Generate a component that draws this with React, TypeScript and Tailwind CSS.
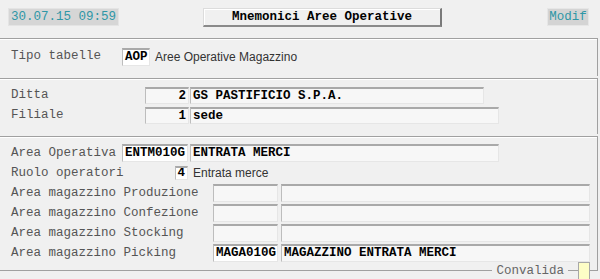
import React from "react";

const mono = { fontFamily: '"Liberation Mono", "Courier New", monospace' };

const boxBase =
  "box-border flex items-center shrink-0 border-t-2 border-t-[#a9a9a9] border-l border-l-[#bdbdbd] border-r border-r-[#e6e6e6] border-b border-b-[#e6e6e6] font-bold text-black px-[2px] leading-none overflow-hidden whitespace-nowrap";

export default function App() {
  return (
    <div
      className="w-[600px] h-[279px] bg-[#f0f0f0] overflow-hidden text-[12.5px] text-[#555]"
      style={mono}
    >
      {/* top bar */}
      <div className="h-[38px] flex items-start pt-[8px] pl-[8px]">
        <div className="w-[111px] h-[18px] bg-[#d6d6d6] border border-[#e4e4e4] flex items-center pl-[2px] text-[#2f97a6] leading-none">
          30.07.15 09:59
        </div>
        <div className="ml-[84px] w-[239px] h-[19px] box-border bg-[#f0f0f0] border-t border-l border-t-[#dcdcdc] border-l-[#dcdcdc] border-r-2 border-b-2 border-r-[#7a7a7a] border-b-[#8a8a8a] shadow-[inset_1px_1px_0_#ffffff] flex items-center justify-center font-bold text-black leading-none">
          Mnemonici Aree Operative
        </div>
        <div className="ml-[105px] w-[42px] h-[18px] box-border bg-[#d4d4d4] border border-[#e6e6e6] flex items-center justify-center text-[#2f97a6] leading-none">
          Modif
        </div>
      </div>

      <div className="w-[598px]">
        {/* Panel A */}
        <div className="h-[38px] box-border border-t border-r border-[#a0a0a0] shadow-[inset_0_1px_0_#ffffff] pt-[9px] pl-[11px]">
          <div className="flex items-center h-[17px]">
            <div className="w-[111px] shrink-0">Tipo tabelle</div>
            <div className={`${boxBase} w-[28px] h-[18px] bg-white`}>AOP</div>
            <div
              className="ml-[5px] text-[12px] text-[#333]"
              style={{ fontFamily: '"Liberation Sans", Arial, sans-serif' }}
            >
              Aree Operative Magazzino
            </div>
          </div>
        </div>

        {/* Panel B */}
        <div className="mt-[2px] h-[56px] box-border border-t border-r border-[#a0a0a0] shadow-[inset_0_1px_0_#ffffff] pt-[8px] pl-[11px] flex flex-col gap-[3px]">
          <div className="flex items-center h-[17px]">
            <div className="w-[134px] shrink-0">Ditta</div>
            <div className={`${boxBase} w-[44px] h-[17px] bg-[#f7f7f7] justify-end`}>2</div>
            <div className={`${boxBase} ml-[1px] w-[294px] h-[17px] bg-[#f7f7f7]`}>
              GS PASTIFICIO S.P.A.
            </div>
          </div>
          <div className="flex items-center h-[17px]">
            <div className="w-[134px] shrink-0">Filiale</div>
            <div className={`${boxBase} w-[44px] h-[17px] bg-[#f7f7f7] justify-end`}>1</div>
            <div className={`${boxBase} ml-[1px] w-[309px] h-[17px] bg-[#f7f7f7]`}>sede</div>
          </div>
        </div>

        {/* Panel C */}
        <div className="mt-[2px] border-t border-[#a0a0a0] shadow-[inset_0_1px_0_#ffffff]">
          <div className="box-border border-r border-b border-[#a0a0a0] pt-[7px] pb-[8px] pl-[11px] flex flex-col gap-[2px]">
            <div className="flex items-center h-[18px]">
              <div className="w-[111px] shrink-0">Area Operativa</div>
              <div className={`${boxBase} w-[66px] h-[18px] bg-white`}>ENTM010G</div>
              <div className={`${boxBase} ml-[2px] w-[309px] h-[18px] bg-[#f7f7f7]`}>
                ENTRATA MERCI
              </div>
            </div>
            <div className="flex items-center h-[18px]">
              <div className="w-[164px] shrink-0">Ruolo operatori</div>
              <div className={`${boxBase} w-[13px] h-[14px] bg-white justify-end px-[1px]`}>4</div>
              <div
                className="ml-[5px] text-[12px] text-[#333]"
                style={{ fontFamily: '"Liberation Sans", Arial, sans-serif' }}
              >
                Entrata merce
              </div>
            </div>
            <div className="flex items-center h-[18px]">
              <div className="w-[202px] shrink-0">Area magazzino Produzione</div>
              <div className={`${boxBase} w-[65px] h-[18px] bg-[#f7f7f7]`}></div>
              <div className={`${boxBase} ml-[3px] w-[309px] h-[18px] bg-[#f7f7f7]`}></div>
            </div>
            <div className="flex items-center h-[18px]">
              <div className="w-[202px] shrink-0">Area magazzino Confezione</div>
              <div className={`${boxBase} w-[65px] h-[18px] bg-[#f7f7f7]`}></div>
              <div className={`${boxBase} ml-[3px] w-[309px] h-[18px] bg-[#f7f7f7]`}></div>
            </div>
            <div className="flex items-center h-[18px]">
              <div className="w-[202px] shrink-0">Area magazzino Stocking</div>
              <div className={`${boxBase} w-[65px] h-[18px] bg-[#f7f7f7]`}></div>
              <div className={`${boxBase} ml-[3px] w-[309px] h-[18px] bg-[#f7f7f7]`}></div>
            </div>
            <div className="flex items-center h-[18px]">
              <div className="w-[202px] shrink-0">Area magazzino Picking</div>
              <div className={`${boxBase} w-[65px] h-[18px] bg-white`}>MAGA010G</div>
              <div className={`${boxBase} ml-[3px] w-[309px] h-[18px] bg-[#f7f7f7]`}>
                MAGAZZINO ENTRATA MERCI
              </div>
            </div>
          </div>
          {/* legend on bottom border */}
          <div className="relative -mt-[9px] h-[18px] flex items-center justify-end pr-[8px]">
            <div className="bg-[#f0f0f0] px-[4px] text-[#666] leading-none">Convalida</div>
            <div className="w-[10px]"></div>
            <div className="w-[12px] h-[18px] box-border bg-[#fdfdc6] border border-[#a8a8a8]"></div>
          </div>
        </div>
      </div>
    </div>
  );
}
